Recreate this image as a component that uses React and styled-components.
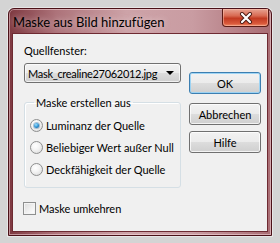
import React from "react";
import styled, { createGlobalStyle } from "styled-components";

const GlobalStyle = createGlobalStyle`
  html, body {
    margin: 0;
    padding: 0;
    background: #d4d4d4;
  }
  body {
    font-family: "Segoe UI", Lato, "Noto Sans", sans-serif;
    font-size: 11px;
    color: #000;
  }
`;

const Page = styled.div`
  width: 280px;
  height: 243px;
  padding: 8px 0 0 8px;
  box-sizing: border-box;
`;

const Window = styled.div`
  width: 264px;
  height: 228px;
  box-sizing: border-box;
  border: 1px solid #4b1118;
  border-radius: 6px 6px 0 0;
  background: linear-gradient(
    to right,
    #7e3840 0%,
    #ad737a 18%,
    #cda3a8 45%,
    #c99ca2 70%,
    #a96d74 100%
  );
  box-shadow: inset 0 0 0 1px rgba(255, 230, 234, 0.5), 0 0 0 1px rgba(255, 255, 255, 0.45);
  display: flex;
  flex-direction: column;
`;

const TitleBar = styled.div`
  height: 24px;
  display: flex;
  justify-content: space-between;
  align-items: flex-start;
  padding-left: 4px;
  flex-shrink: 0;
`;

const Title = styled.div`
  margin-top: 6px;
  font-size: 13px;
  line-height: 15px;
  color: #000;
  text-shadow: 0 0 6px rgba(255, 240, 240, 0.7);
`;

const CloseButton = styled.div`
  width: 47px;
  height: 18px;
  margin-right: 2px;
  box-sizing: border-box;
  border: 1px solid #5a1a14;
  border-top: none;
  border-radius: 0 0 4px 4px;
  background: linear-gradient(
    to bottom,
    #e7a393 0%,
    #d86a52 40%,
    #c23a22 55%,
    #d9583a 85%,
    #ee8a66 100%
  );
  box-shadow: inset 0 0 0 1px rgba(255, 200, 180, 0.5);
  display: flex;
  align-items: center;
  justify-content: center;
`;

const Client = styled.div`
  flex: 1;
  margin: 0 3px 3px 3px;
  border: 1px solid #6e2a32;
  background: #f0f0f0;
  padding: 9px 6px 0 10px;
  display: flex;
  gap: 8px;
`;

const LeftColumn = styled.div`
  width: 160px;
  display: flex;
  flex-direction: column;
`;

const RightColumn = styled.div`
  margin-top: 29px;
  display: flex;
  flex-direction: column;
`;

const Label = styled.div`
  line-height: 15px;
  padding-left: 1px;
`;

const Combo = styled.div`
  margin-top: 5px;
  margin-left: 1px;
  height: 20px;
  box-sizing: border-box;
  border: 1px solid #707070;
  border-radius: 3px;
  background: linear-gradient(
    to bottom,
    #f2f2f2 0%,
    #ebebeb 50%,
    #dddddd 51%,
    #cfcfcf 100%
  );
  box-shadow: inset 0 0 0 1px rgba(255, 255, 255, 0.7);
  display: flex;
  align-items: center;
  justify-content: space-between;
  padding: 0 6px 0 3px;
  line-height: 15px;
  white-space: nowrap;
  letter-spacing: -0.3px;
`;

const Arrow = styled.span`
  width: 0;
  height: 0;
  border-left: 4px solid transparent;
  border-right: 4px solid transparent;
  border-top: 4px solid #000;
`;

const Group = styled.fieldset`
  margin: 12px 0 0 1px;
  padding: 4px 0 7px 5px;
  border: 1px solid #d5dfe5;
  border-radius: 3px;
  box-shadow: 1px 1px 0 #ffffff inset;
  min-width: 0;
`;

const Legend = styled.legend`
  padding: 0 2px;
  margin-left: 4px;
  line-height: 15px;
`;

const OptionRow = styled.label`
  display: flex;
  align-items: center;
  height: 22px;
  gap: 3px;
  white-space: nowrap;
`;

const RadioCircle = styled.span`
  width: 13px;
  height: 13px;
  box-sizing: border-box;
  border-radius: 50%;
  border: 1px solid #8e8f8f;
  background: radial-gradient(circle at 40% 35%, #ffffff 0%, #f4f4f4 40%, #d6d6d6 100%);
  display: flex;
  align-items: center;
  justify-content: center;
  flex-shrink: 0;
`;

const RadioDot = styled.span`
  width: 5px;
  height: 5px;
  border-radius: 50%;
  background: radial-gradient(circle at 40% 35%, #9ee0ff 0%, #2a8fd0 55%, #0d4f8a 100%);
  box-shadow: 0 0 0 1px rgba(30, 90, 140, 0.35);
`;

const CheckRow = styled.label`
  display: flex;
  align-items: center;
  gap: 3px;
  margin-top: 12px;
  height: 16px;
`;

const CheckBox = styled.span`
  width: 13px;
  height: 13px;
  box-sizing: border-box;
  border: 1px solid #8e8f8f;
  background: linear-gradient(135deg, #dcdcdc 0%, #f2f2f2 60%, #ffffff 100%);
  box-shadow: inset 0 0 0 1px #f4f4f4;
  flex-shrink: 0;
`;

const Button = styled.div`
  width: 72px;
  height: 22px;
  box-sizing: border-box;
  margin-bottom: ${(p) => p.$gap || 0}px;
  border: 1px solid ${(p) => (p.$default ? "#3c7fb1" : "#707070")};
  border-radius: 3px;
  background: linear-gradient(
    to bottom,
    #f2f2f2 0%,
    #ebebeb 50%,
    #dddddd 51%,
    #cfcfcf 100%
  );
  box-shadow: inset 0 0 0 1px
    ${(p) => (p.$default ? "rgba(150, 210, 245, 0.9)" : "rgba(255, 255, 255, 0.75)")};
  display: flex;
  align-items: center;
  justify-content: center;
  line-height: 15px;
`;

function App() {
  return (
    <>
      <GlobalStyle />
      <Page>
        <Window>
          <TitleBar>
            <Title>Maske aus Bild hinzufügen</Title>
            <CloseButton>
              <svg width="14" height="12" viewBox="0 0 14 12">
                <path
                  d="M3 2 L11 10 M11 2 L3 10"
                  stroke="#4a1a12"
                  strokeWidth="4"
                  strokeLinecap="round"
                />
                <path
                  d="M3 2 L11 10 M11 2 L3 10"
                  stroke="#ffffff"
                  strokeWidth="2.2"
                  strokeLinecap="round"
                />
              </svg>
            </CloseButton>
          </TitleBar>
          <Client>
            <LeftColumn>
              <Label>Quellfenster:</Label>
              <Combo>
                <span>Mask_crealine27062012.jpg</span>
                <Arrow />
              </Combo>
              <Group>
                <Legend>Maske erstellen aus</Legend>
                <OptionRow>
                  <RadioCircle>
                    <RadioDot />
                  </RadioCircle>
                  Luminanz der Quelle
                </OptionRow>
                <OptionRow>
                  <RadioCircle />
                  Beliebiger Wert außer Null
                </OptionRow>
                <OptionRow>
                  <RadioCircle />
                  Deckfähigkeit der Quelle
                </OptionRow>
              </Group>
              <CheckRow>
                <CheckBox />
                Maske umkehren
              </CheckRow>
            </LeftColumn>
            <RightColumn>
              <Button $default $gap={9}>
                OK
              </Button>
              <Button $gap={6}>Abbrechen</Button>
              <Button>Hilfe</Button>
            </RightColumn>
          </Client>
        </Window>
      </Page>
    </>
  );
}

export default App;
